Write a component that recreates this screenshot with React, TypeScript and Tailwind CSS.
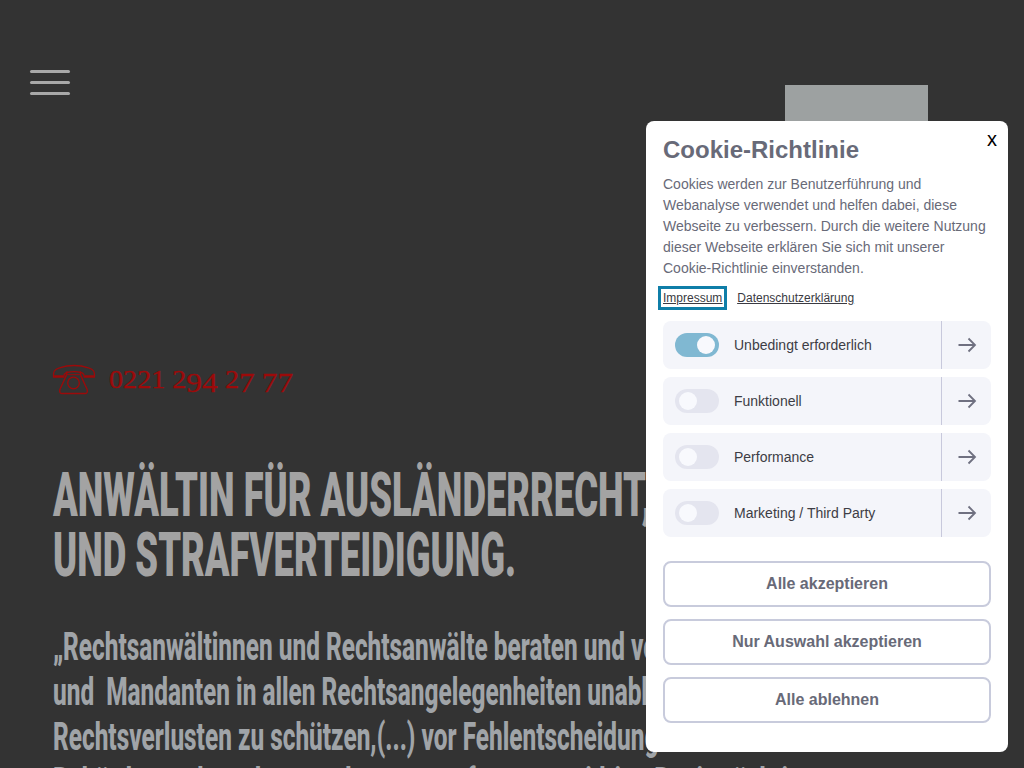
const para = [
  "„Rechtsanwältinnen und Rechtsanwälte beraten und vertreten ihre Mandantinnen",
  "und  Mandanten in allen Rechtsangelegenheiten unabhängig. Sie haben sie vor",
  "Rechtsverlusten zu schützen,(...) vor Fehlentscheidungen durch Gerichte und",
  "Behörden zu bewahren und gegen verfassungswidrige Beeinträchtigung",
];

const rows = ["Unbedingt erforderlich", "Funktionell", "Performance", "Marketing / Third Party"];
const buttons = ["Alle akzeptieren", "Nur Auswahl akzeptieren", "Alle ablehnen"];

function PhoneIcon() {
  return (
    <svg className="-mt-[3px]" width="44" height="31" viewBox="0 0 44 32" fill="none" stroke="#9c0a0a" strokeWidth="1.4" strokeLinejoin="round">
      <path d="M1 13.5 C0.5 8 1.5 5.5 7 4 C16 1 28 1 37 4 C42.5 5.5 43.5 8 43 13.5 L32.5 13.5 C33 11 32 10 30 9 C25 7.5 19 7.5 14 9 C12 10 11 11 11.5 13.5 Z" />
      <path d="M1.5 12.5 H11 M33 12.5 H42.5" strokeWidth="2" />
      <path d="M15 7.5 L14 12 L7.5 26 C7 28 7 30.5 9.5 30.5 L33.5 30.5 C36 30.5 36 28 35.5 26 L29 12 L28.5 7.5" />
      <path d="M14 11 H29" strokeWidth="1" />
      <circle cx="21.5" cy="19.5" r="6" />
    </svg>
  );
}

function Toggle({ on }: { on: boolean }) {
  return (
    <div className={on ? "w-11 h-6 rounded-full bg-[#80b8d2] flex items-center justify-end pr-1" : "w-11 h-6 rounded-full bg-[#e4e5ef] flex items-center pl-1"}>
      <div className="w-[18px] h-[18px] rounded-full bg-[#f8f9fd]" />
    </div>
  );
}

function Low({ children }: { children: string }) {
  return <span className="text-[28px] align-[-4px] leading-none">{children}</span>;
}

export default function App() {
  return (
    <div className="relative h-[768px] overflow-hidden bg-[#333333] font-['Liberation_Sans',sans-serif]">
      <div className="flex items-start justify-between pl-[30px] pr-[96px] pt-[70px]">
        <div className="flex flex-col gap-[8px] w-10">
          <div className="h-[3px] rounded-sm bg-[#a8a8a8]" />
          <div className="h-[3px] rounded-sm bg-[#a8a8a8]" />
          <div className="h-[3px] rounded-sm bg-[#a8a8a8]" />
        </div>
        <div className="mt-[15px] w-[143px] h-[70px] bg-[#9da1a1]" />
      </div>

      <div className="pl-[52px] pt-[208px]">
        <div className="flex items-center gap-[13px] h-[36px]">
          <PhoneIcon />
          <div className="-mt-[2px] font-['Liberation_Serif',serif] text-[25px] text-[#9c0a0a] whitespace-nowrap origin-left scale-x-[1.125] [-webkit-text-stroke:0.3px_#9c0a0a]">
            0221 2<Low>9</Low><Low>4</Low> 2<Low>7</Low> <Low>7</Low><Low>7</Low>
          </div>
        </div>

        <h1 className="ml-px mt-[66px] font-['Roboto',sans-serif] font-black text-[62px] leading-[60px] text-[#a3a3a3] whitespace-nowrap uppercase origin-left scale-x-[0.587]">
          Anwältin für Ausländerrecht,<br />und Strafverteidigung.
        </h1>

        <div className="ml-px mt-[40px] font-['Roboto',sans-serif] font-extrabold text-[39px] leading-[45px] text-[#a0a4a8] whitespace-pre origin-left scale-x-[0.625]">
          {para.map((l) => (
            <div key={l}>{l}</div>
          ))}
        </div>
      </div>

      <div className="absolute left-[646px] top-[121px] w-[362px] h-[631px] bg-white rounded-lg px-[17px] text-[#686a78]">
        <button className="absolute right-[11px] top-[8px] text-[20px] leading-5 text-black font-normal">x</button>
        <h2 className="pt-[14px] text-[24px] leading-[30px] font-bold">Cookie-Richtlinie</h2>
        <p className="mt-[9px] text-[14px] leading-[21px]">
          Cookies werden zur Benutzerführung und<br />
          Webanalyse verwendet und helfen dabei, diese<br />
          Webseite zu verbessern. Durch die weitere Nutzung<br />
          dieser Webseite erklären Sie sich mit unserer<br />
          Cookie-Richtlinie einverstanden.
        </p>
        <div className="mt-[7px] flex items-center gap-[10px] text-[12px] leading-[14px] text-[#3a3a42] underline">
          <a className="-ml-[5px] border-[3px] border-[#0f7ea8] px-[2px] py-[2px]">Impressum</a>
          <a>Datenschutzerklärung</a>
        </div>

        <div className="mt-[11px] flex flex-col gap-2">
          {rows.map((r, i) => (
            <div key={r} className="h-12 rounded-lg bg-[#f4f5fa] flex items-center text-[14px] text-[#3d3d45]">
              <div className="pl-3 pr-[15px]">
                <Toggle on={i === 0} />
              </div>
              <div className="flex-1">{r}</div>
              <div className="w-[50px] h-12 border-l border-[#c8c9dc] flex items-center justify-center">
                <svg width="20" height="16" viewBox="0 0 20 16" fill="none" stroke="#6f7080" strokeWidth="1.8">
                  <path d="M1.5 8 H18 M11.5 1.5 L18 8 L11.5 14.5" />
                </svg>
              </div>
            </div>
          ))}
        </div>

        <div className="mt-6 flex flex-col gap-3">
          {buttons.map((b) => (
            <button key={b} className="h-[46px] rounded-lg border-2 border-[#c8cbdc] bg-white text-[16px] font-bold text-[#686a78]">
              {b}
            </button>
          ))}
        </div>
      </div>
    </div>
  );
}
